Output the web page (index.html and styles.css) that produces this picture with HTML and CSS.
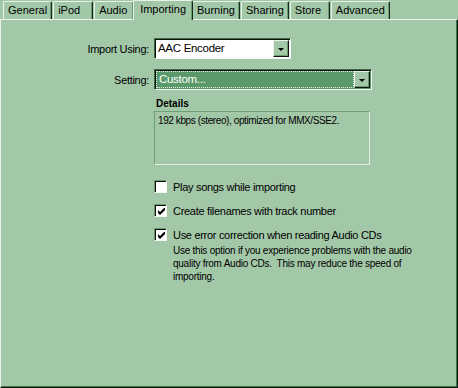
FILE: index.html
```html
<!DOCTYPE html>
<html lang="en">

<head>
  <meta charset="UTF-8">
  <title>Preferences</title>
  <link rel="stylesheet" href="styles.css">
</head>

<body>
  <div class="tabs">
    <div class="tab">General</div>
    <div class="tab">iPod</div>
    <div class="tab">Audio</div>
    <div class="tab active">Importing</div>
    <div class="tab">Burning</div>
    <div class="tab">Sharing</div>
    <div class="tab">Store</div>
    <div class="tab">Advanced</div>
  </div>

  <div class="panel">
    <div class="form">
      <label class="field-label">Import Using:</label>
      <div class="combo combo-short">
        <span class="combo-value">AAC Encoder</span>
        <span class="combo-btn"><i class="arrow"></i></span>
      </div>

      <label class="field-label">Setting:</label>
      <div class="combo combo-long selected">
        <span class="combo-value">Custom...</span>
        <span class="combo-btn"><i class="arrow"></i></span>
      </div>

      <div></div>
      <div class="details">
        <div class="details-title">Details</div>
        <div class="details-box">192 kbps (stereo), optimized for MMX/SSE2.</div>
      </div>

      <div></div>
      <div class="options">
        <div class="check-row">
          <span class="check"></span>
          <span>Play songs while importing</span>
        </div>
        <div class="check-row">
          <span class="check"><svg width="7" height="7" viewBox="0 0 7 7"><path d="M0 2v3l2 2 5-5V-1L2 4z" fill="#000"/></svg></span>
          <span>Create filenames with track number</span>
        </div>
        <div class="check-row">
          <span class="check"><svg width="7" height="7" viewBox="0 0 7 7"><path d="M0 2v3l2 2 5-5V-1L2 4z" fill="#000"/></svg></span>
          <span>Use error correction when reading Audio CDs</span>
        </div>
        <p class="hint">Use this option if you experience problems with the audio quality from Audio CDs.&nbsp; This may reduce the speed of importing.</p>
      </div>
    </div>
  </div>
</body>

</html>
```

FILE: styles.css
```css
body {
  margin: 0;
  width: 458px;
  height: 388px;
  background-color: #a3c8a8;
  font-family: "Liberation Sans", Arial, sans-serif;
  font-size: 11px;
  letter-spacing: -0.3px;
  color: #000;
  overflow: hidden;
}

.tabs {
  display: flex;
  align-items: flex-end;
  height: 19px;
  padding-left: 3px;
}

.tab {
  min-width: 30px;
  height: 17px;
  line-height: 17px;
  padding: 0 4px;
  margin-right: 1px;
  letter-spacing: 0;
  border-top: 1px solid #e8f2e8;
  border-left: 1px solid #e8f2e8;
  border-right: 1px solid #1a2a1a;
  border-radius: 2px 2px 0 0;
  box-shadow: inset -1px 0 0 #6a9a70;
}

.tab.active {
  height: 19px;
  line-height: 16px;
  margin: 0 -1px -1px -2px;
  padding: 0 6px;
  position: relative;
  background-color: #a3c8a8;
  z-index: 1;
}

.panel {
  height: 367px;
  border-top: 1px solid #e8f2e8;
  border-left: 1px solid #e8f2e8;
  border-right: 1px solid #0a140a;
  border-bottom: 1px solid #0a140a;
  box-shadow: inset -1px -1px 0 #3c7a48;
}

.form {
  display: grid;
  grid-template-columns: 148px 1fr;
  column-gap: 5px;
  row-gap: 10px;
  align-items: center;
  padding-top: 18px;
}

.field-label {
  text-align: right;
}

.combo {
  display: flex;
  height: 21px;
  box-sizing: border-box;
  border-top: 1px solid #3c6a44;
  border-left: 1px solid #3c6a44;
  border-right: 1px solid #f2f8f2;
  border-bottom: 1px solid #f2f8f2;
  box-shadow: inset 1px 1px 0 #0a140a;
  background-color: #fff;
}

.combo-short {
  width: 137px;
}

.combo-long {
  width: 218px;
}

.combo-value {
  flex: 1;
  padding: 3px 3px 0 3px;
  font-size: 11.5px;
}

.combo.selected {
  background-color: #5a9a6a;
}

.combo.selected .combo-value {
  color: #fff;
  margin: 2px 1px 2px 2px;
  padding: 0 2px;
  line-height: 15px;
  outline: 1px dotted #e8f2e8;
}

.combo-btn {
  width: 16px;
  margin: 1px 1px 1px 0;
  box-sizing: border-box;
  background-color: #a3c8a8;
  border-top: 1px solid #e8f2e8;
  border-left: 1px solid #e8f2e8;
  border-right: 1px solid #0a140a;
  border-bottom: 1px solid #0a140a;
  box-shadow: inset -1px -1px 0 #6a9a70;
  display: flex;
  align-items: center;
  justify-content: center;
}

.arrow {
  width: 0;
  height: 0;
  border-left: 3px solid transparent;
  border-right: 3px solid transparent;
  border-top: 3px solid #000;
  margin-top: 1px;
}

.details {
  font-size: 10px;
  letter-spacing: -0.4px;
  margin-top: -2px;
}

.details-title {
  font-weight: bold;
  letter-spacing: 0;
  padding-left: 2px;
  margin-bottom: 2px;
}

.details-box {
  width: 216px;
  height: 54px;
  box-sizing: border-box;
  border: 1px solid #6e9e76;
  border-right-color: #e0eee0;
  border-bottom-color: #e0eee0;
  padding: 3px 3px;
}

.options {
  padding-top: 5px;
}

.check-row {
  display: flex;
  align-items: center;
  gap: 6px;
  height: 13px;
  margin-bottom: 11px;
}

.check-row:last-of-type {
  margin-bottom: 0;
}

.check {
  width: 13px;
  height: 13px;
  box-sizing: border-box;
  background-color: #fff;
  border-top: 1px solid #6a9a70;
  border-left: 1px solid #6a9a70;
  border-right: 1px solid #f2f8f2;
  border-bottom: 1px solid #f2f8f2;
  box-shadow: inset 1px 1px 0 #0a140a;
  display: flex;
  align-items: center;
  justify-content: center;
}

.check svg {
  margin: 1px 0 0 1px;
}

.hint {
  margin: 3px 0 0 19px;
  width: 262px;
  font-size: 10px;
  letter-spacing: -0.25px;
  line-height: 13px;
}
```
